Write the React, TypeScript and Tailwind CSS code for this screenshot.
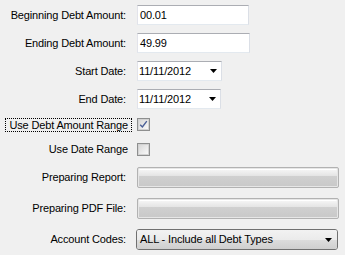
import React from 'react'

const font = { fontFamily: '"Liberation Sans", Arial, sans-serif' }

function Arrow() {
  return (
    <svg width="7" height="4" viewBox="0 0 7 4" className="shrink-0">
      <polygon points="0,0 7,0 3.5,4" fill="#000" />
    </svg>
  )
}

function Label({ children }: { children: React.ReactNode }) {
  return <div className="w-[137px] shrink-0 pr-[11px] text-right">{children}</div>
}

function TextBox({ value, width }: { value: string; width: string }) {
  return (
    <div
      className={`flex h-[20px] items-center border border-t-[#abadb3] border-r-[#dbdfe6] border-b-[#e3e9ef] border-l-[#e2e3ea] bg-white pl-[2px] ${width}`}
    >
      {value}
    </div>
  )
}

function DatePicker({ value, width }: { value: string; width: string }) {
  return (
    <div
      className={`flex h-[20px] items-center justify-between border border-t-[#abadb3] border-r-[#dbdfe6] border-b-[#e3e9ef] border-l-[#e2e3ea] bg-white pl-[1px] pr-[4px] ${width}`}
    >
      <span>{value}</span>
      <Arrow />
    </div>
  )
}

function CheckBox({ checked }: { checked: boolean }) {
  return (
    <div className="flex h-[13px] w-[13px] items-center justify-center border border-[#8e8f8f] bg-white">
      <div className="flex h-[11px] w-[11px] items-center justify-center border border-[#d2d2d2] bg-gradient-to-br from-[#d8d8d8] to-[#f9f9f9]">
        {checked && (
          <svg width="9" height="9" viewBox="0 0 9 9">
            <path d="M1.2 4.8 L3.4 7 L7.8 1.2" stroke="#4a5f97" strokeWidth="1.4" fill="none" />
          </svg>
        )}
      </div>
    </div>
  )
}

function Progress() {
  return (
    <div className="h-[21px] w-[202px] rounded-[2px] border border-[#b2b2b2] bg-[#e6e6e6] p-px">
      <div className="flex h-full w-full flex-col rounded-[1px] border-t border-white">
        <div className="h-[6px] bg-gradient-to-b from-[#f4f4f4] to-[#e4e4e4]" />
        <div className="flex-1 bg-gradient-to-b from-[#d0d0d0] to-[#c9c9c9]" />
      </div>
    </div>
  )
}

export default function App() {
  return (
    <div
      className="h-[255px] w-[345px] bg-[#f0f0f0] pt-[5px] text-[11px] tracking-[-0.15px] text-black"
      style={font}
    >
      <div className="flex h-[20px] items-center">
        <Label>Beginning Debt Amount:</Label>
        <TextBox value="00.01" width="w-[112px]" />
      </div>
      <div className="mt-[8px] flex h-[20px] items-center">
        <Label>Ending Debt Amount:</Label>
        <TextBox value="49.99" width="w-[113px]" />
      </div>
      <div className="mt-[8px] flex h-[20px] items-center">
        <Label>Start Date:</Label>
        <DatePicker value="11/11/2012" width="w-[85px]" />
      </div>
      <div className="mt-[8px] flex h-[20px] items-center">
        <Label>End Date:</Label>
        <DatePicker value="11/11/2012" width="w-[84px]" />
      </div>
      <div className="mt-[9px] flex h-[13px] items-center">
        <div className="flex w-[137px] shrink-0 justify-end pr-[5px]">
          <span className="border border-dotted border-black px-[3px] leading-[12px]">
            Use Debt Amount Range
          </span>
        </div>
        <CheckBox checked />
      </div>
      <div className="mt-[12px] flex h-[13px] items-center">
        <div className="w-[137px] shrink-0 pr-[9px] text-right">Use Date Range</div>
        <CheckBox checked={false} />
      </div>
      <div className="mt-[11px] flex h-[21px] items-center">
        <Label>Preparing Report:</Label>
        <Progress />
      </div>
      <div className="mt-[10px] flex h-[21px] items-center">
        <Label>Preparing PDF File:</Label>
        <Progress />
      </div>
      <div className="mt-[10px] flex h-[21px] items-center">
        <div className="w-[136px] shrink-0 pr-[10px] text-right">Account Codes:</div>
        <div className="flex h-[21px] w-[202px] flex-col overflow-hidden rounded-[3px] border border-[#707070]">
          <div className="flex h-full items-center justify-between bg-[linear-gradient(to_bottom,#f2f2f2_0%,#ebebeb_50%,#dddddd_50%,#cfcfcf_100%)] pl-[3px] pr-[5px]">
            <span>ALL - Include all Debt Types</span>
            <Arrow />
          </div>
        </div>
      </div>
    </div>
  )
}
